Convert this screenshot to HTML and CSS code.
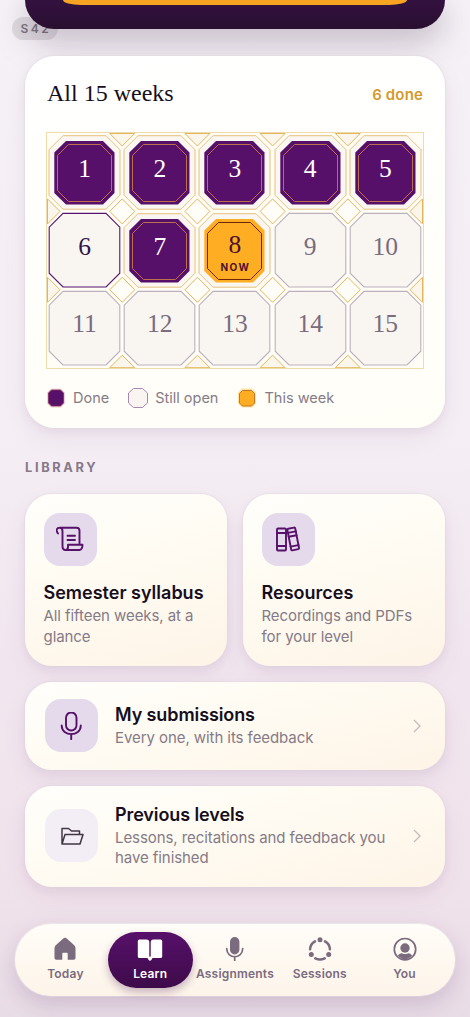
FILE: index.html
```html
<!DOCTYPE html>
<html lang="en">
<head>
<meta charset="utf-8">
<title>Learn</title>
<link rel="stylesheet" href="styles.css">
</head>
<body>
<svg class="defs" aria-hidden="true">
  <symbol id="tile-done" viewBox="0 0 75.2 78.4">
    <path class="lattice" d="M16 2.700H59L73 16.700V62.200L59 76.200H16L2 62.200V16.700Z"/>
    <path class="plum" d="M19 8H56L67.500 19.500V60L56 71.500H19L7.300 60V19.500Z"/>
    <path class="copper" d="M21.500 11.500H53.500L64.500 22.500V57.500L53.500 68.500H21.500L10.500 57.500V22.500Z"/>
  </symbol>
  <symbol id="tile-open" viewBox="0 0 75.2 78.4">
    <path class="outline" d="M16 2.400H59L72.800 16.200V62.200L59 76H16L2.200 62.200V16.200Z"/>
  </symbol>
  <symbol id="tile-now" viewBox="0 0 75.2 78.4">
    <path class="lattice" d="M16 2.700H59L73 16.700V62.200L59 76.200H16L2 62.200V16.700Z"/>
    <path class="amber" d="M19 8H56L67.500 19.500V60L56 71.500H19L7.300 60V19.500Z"/>
    <path class="ink" d="M21.500 11.500H53.500L64.500 22.500V57.500L53.500 68.500H21.500L10.500 57.500V22.500Z"/>
  </symbol>
</svg>

<div class="screen">
  <div class="tag">S42</div>
  <section class="hero"><div class="hero-button"></div></section>

  <section class="card weeks">
    <header class="weeks-head"><h2>All 15 weeks</h2><span>6 done</span></header>
    <div class="board">
      <div class="tile done"><svg><use href="#tile-done"/></svg><b>1</b></div>
      <div class="tile done"><svg><use href="#tile-done"/></svg><b>2</b></div>
      <div class="tile done"><svg><use href="#tile-done"/></svg><b>3</b></div>
      <div class="tile done"><svg><use href="#tile-done"/></svg><b>4</b></div>
      <div class="tile done"><svg><use href="#tile-done"/></svg><b>5</b></div>
      <div class="tile mid open"><svg><use href="#tile-open"/></svg><b>6</b></div>
      <div class="tile mid done"><svg><use href="#tile-done"/></svg><b>7</b></div>
      <div class="tile mid now"><svg><use href="#tile-now"/></svg><b>8<small>NOW</small></b></div>
      <div class="tile mid"><svg><use href="#tile-open"/></svg><b>9</b></div>
      <div class="tile mid"><svg><use href="#tile-open"/></svg><b>10</b></div>
      <div class="tile last"><svg><use href="#tile-open"/></svg><b>11</b></div>
      <div class="tile last"><svg><use href="#tile-open"/></svg><b>12</b></div>
      <div class="tile last"><svg><use href="#tile-open"/></svg><b>13</b></div>
      <div class="tile last"><svg><use href="#tile-open"/></svg><b>14</b></div>
      <div class="tile last"><svg><use href="#tile-open"/></svg><b>15</b></div>
      <svg class="gems" viewBox="0 0 376 235.200">
        <path class="half" d="M62.700.5H87.700L75.200 13ZM137.900.5H162.900L150.400 13ZM213.100.5H238.100L225.600 13ZM288.300.5H313.300L300.800 13Z"/>
        <path class="half" d="M62.700 234.700H87.700L75.200 222.200ZM137.900 234.700H162.900L150.400 222.200ZM213.100 234.700H238.100L225.600 222.200ZM288.300 234.700H313.300L300.800 222.200Z"/>
        <path class="half" d="M.5 65.900V90.900L13 78.400ZM.5 144.300V169.300L13 156.800ZM375.500 65.900V90.900L363 78.400ZM375.500 144.300V169.300L363 156.800Z"/>
        <g class="full">
          <path d="M75.200 65.900l12.500 12.500-12.500 12.500-12.500-12.500ZM150.400 65.900l12.500 12.500-12.500 12.500-12.500-12.500ZM225.600 65.900l12.500 12.500-12.500 12.500-12.500-12.500ZM300.800 65.900l12.500 12.500-12.500 12.500-12.500-12.500Z"/>
          <path d="M75.200 144.300l12.500 12.500-12.500 12.500-12.500-12.500ZM150.400 144.300l12.500 12.500-12.500 12.500-12.500-12.500ZM225.600 144.300l12.500 12.500-12.500 12.500-12.500-12.500ZM300.800 144.300l12.500 12.500-12.500 12.500-12.500-12.500Z"/>
        </g>
      </svg>
    </div>
    <div class="legend">
      <span class="key"><svg viewBox="0 0 20 22"><path class="halo-plum" d="M5 1.500H15L19 5.500V16.500L15 20.500H5L1 16.500V5.500Z"/><path class="swatch-plum" d="M5.500 3H14.500L17.500 6V16L14.500 19H5.500L2.500 16V6Z"/></svg>Done</span>
      <span class="key"><svg viewBox="0 0 20 22"><path class="swatch-open" d="M5.500 1.500H14.500L19.500 6V16L14.500 20.500H5.500L.5 16V6Z"/></svg>Still open</span>
      <span class="key"><svg viewBox="0 0 20 22"><path class="halo-amber" d="M5 1.500H15L19 5.500V16.500L15 20.500H5L1 16.500V5.500Z"/><path class="swatch-amber" d="M5.500 3.500H14.500L17.500 6.500V16L14.500 19H5.500L2.500 16V6.500Z"/></svg>This week</span>
    </div>
  </section>

  <h3 class="section-title">LIBRARY</h3>

  <div class="pair">
    <article class="card tall">
      <div class="icon">
        <svg viewBox="0 0 28 28"><path d="M2 7.500C-.5 4.200 .7 1.800 3.700 1.800H20.500Q23.500 1.800 23.500 4.800V18.200M3.700 1.800C6 1.800 6.500 3.500 6.500 5.200V20.500Q6.500 24 9.500 24H23.500Q26.500 23.500 26.500 18.700H12V21Q12 24 9.500 24M11.500 9.700H19M11.500 14H19"/></svg>
      </div>
      <h4>Semester syllabus</h4>
      <p>All fifteen weeks, at a glance</p>
    </article>
    <article class="card tall">
      <div class="icon">
        <svg viewBox="0 0 28 28"><rect x="3" y="2.500" width="9" height="22" rx="1"/><path d="M3 7H12M3 20H12"/><g transform="rotate(-11 19 13)"><rect x="15.200" y="2" width="8" height="22" rx="1"/><path d="M15.200 6H23.200M15.200 10H23.200M15.200 20H23.200"/></g></svg>
      </div>
      <h4>Resources</h4>
      <p>Recordings and PDFs for your level</p>
    </article>
  </div>

  <article class="card row">
    <div class="icon">
      <svg viewBox="0 0 28 28"><rect x="8" y=".5" width="10.500" height="18" rx="5.250"/><path d="M3.700 13.500C3.700 25 22.800 25 22.800 13.500M13.200 22V27.200"/></svg>
    </div>
    <div class="copy"><h4>My submissions</h4><p>Every one, with its feedback</p></div>
    <svg class="chevron" viewBox="0 0 8 14"><path d="M1 1L7 7L1 13"/></svg>
  </article>

  <article class="card row roomy">
    <div class="icon pale">
      <svg viewBox="0 0 28 28"><path d="M4 22V6.500H10.500L13.500 9H21.500V12.500M4 22L7 12.500H25L22 22Z"/></svg>
    </div>
    <div class="copy"><h4>Previous levels</h4><p>Lessons, recitations and feedback you have finished</p></div>
    <svg class="chevron" viewBox="0 0 8 14"><path d="M1 1L7 7L1 13"/></svg>
  </article>

  <nav class="tabs">
    <a class="tab"><svg viewBox="0 0 24 24"><path d="M12 .8Q13 .8 14 1.800L21 8Q22.500 9.500 22.500 11V21Q22.500 22.700 20.800 22.700H14.700V16.500Q14.700 15.800 14 15.800H10Q9.300 15.800 9.300 16.500V22.700H3.200Q1.500 22.700 1.500 21V11Q1.500 9.500 3 8L10 1.800Q11 .8 12 .8Z"/></svg>Today</a>
    <a class="tab active"><svg viewBox="0 0 26 24"><path d="M2.500 2.500H9.500Q12.300 2.500 12.300 5.500V19.500Q11.300 21 9.500 21H2.500Q.8 21 .8 19.500V4Q.8 2.500 2.500 2.500ZM23.500 2.500H16.500Q13.700 2.500 13.700 5.500V19.500Q14.700 21 16.500 21H23.500Q25.200 21 25.200 19.500V4Q25.200 2.500 23.500 2.500Z"/><path d="M9.500 19.500H16.500L14.500 22.800Q13 24.500 11.500 22.800Z"/></svg>Learn</a>
    <a class="tab"><svg viewBox="0 0 24 24"><rect x="7" y="0" width="9.400" height="17.500" rx="4.700"/><path class="line" d="M3.700 11.500C3.700 22.500 19.700 22.500 19.700 11.500M11.700 19.500V24"/></svg>Assignments</a>
    <a class="tab"><svg viewBox="0 0 24 24"><circle cx="12" cy="2.800" r="2.500"/><circle cx="3.300" cy="17.500" r="2.500"/><circle cx="20.700" cy="17.500" r="2.500"/><path class="arc" d="M7 4.300Q2 7.200 2.100 12.300M17 4.300Q22 7.200 21.900 12.300M7.300 21.300Q12 23.700 16.700 21.300"/></svg>Sessions</a>
    <a class="tab"><svg viewBox="0 0 24 24"><circle class="ring" cx="12" cy="12.200" r="10.700"/><circle cx="12" cy="11" r="4.700"/><path d="M4.800 18.500Q7.500 15.700 9.500 16.500Q12 17.500 14.500 16.500Q16.500 15.700 19.200 18.500Q12 26 4.800 18.500Z"/></svg>You</a>
  </nav>
</div>
</body>
</html>
```
FILE: styles.css
```css
* { box-sizing: border-box; }
body { margin: 0; font-family: Inter, sans-serif; color: #160e1c; }
h2, h3, h4, p { margin: 0; }
svg { fill: none; display: block; }
.defs { position: absolute; width: 0; height: 0; }

.screen {
  position: relative; width: 470px; height: 1017px; overflow: hidden;
  padding: 0 25px;
  display: flex; flex-direction: column;
  background: linear-gradient(#f5f1f6 0, #f5eef4 42%, #f1e6ef 65%, #f0e2eb 88%, #e8dce6 100%);
}

.tag {
  position: absolute; left: 12px; top: 17px; width: 46px; height: 23px;
  border-radius: 12px; background: #ded9df; color: #7c747d;
  font-size: 12px; font-weight: 600; line-height: 23px; letter-spacing: 2.500px; padding-left: 8.500px;
}
.hero {
  position: relative; flex: none; height: 29px;
  padding: 0 38px 24px;
  border-radius: 0 0 31px 31px;
  background: linear-gradient(#331140, #2a0f30);
  box-shadow: 0 8px 24px rgba(57, 25, 65, .14), 0 14px 40px rgba(57, 25, 65, .18);
}
.hero-button { height: 5px; border-radius: 0 0 18px 18px / 0 0 5px 5px; background: #f6a422; }

.card {
  position: relative; flex: none;
  border-radius: 27px;
  background: linear-gradient(165deg, #fffefb 0%, #fffcf4 35%, #fef4e7 100%);
  box-shadow: 0 0 0 1px rgba(225, 211, 217, .35), 0 4px 10px rgba(82, 34, 94, .06), 0 10px 26px rgba(82, 34, 94, .06);
}
.weeks {
  margin-top: 27px; height: 372px; padding: 25px 22px 0; border-radius: 30px;
  background: linear-gradient(170deg, #ffffff, #fffef7);
}
.weeks-head { display: flex; justify-content: space-between; height: 51.500px; }
.weeks-head h2 { font: 400 24px/24px "Liberation Serif", serif; }
.weeks-head span { font-size: 15px; font-weight: 600; line-height: 28px; color: #d39a2c; letter-spacing: .15px; }

.board {
  position: relative; width: 376px;
  display: grid; grid-template: repeat(3, 78.400px) / repeat(5, 75.200px);
  background: #fffdf6; outline: 1px solid #f0dcab;
}
.tile { display: grid; color: #796c7c; }
.tile > * { grid-area: 1 / 1; }
.tile svg { width: 75.200px; height: 78.400px; stroke: #bbb1bd; }
.tile.open svg { stroke: #55136b; }
.tile b { z-index: 1; justify-self: center; padding-top: 22px; text-align: center; font: 400 25.500px/28px "Liberation Serif", serif; }
.tile.last b { padding-top: 21px; }
.tile.done b { color: #fff; }
.tile.open b { color: #321448; }
.tile.now b { color: #4d112f; padding-top: 20px; }
.tile small { display: block; font: 700 10px/12px Inter, sans-serif; letter-spacing: 1.500px; margin: 2px -1px 0 0; }
.lattice { fill: #faf6f1; stroke: #e6c17c; stroke-width: 1; }
.plum { fill: #57106a; stroke: none; }
.copper { stroke: #be7149; stroke-width: 1; }
.amber { fill: #ffae23; stroke: none; }
.ink { stroke: #6c250e; stroke-width: 1; }
.outline { fill: #f9f6f2; stroke: inherit; stroke-width: 1.100; }
.gems { position: absolute; inset: 0; width: 376px; height: 235.200px; stroke: #e3b55a; stroke-width: 1; }
.half { fill: #fbf6ec; }
.full { fill: #fffdf8; }

.legend { display: flex; gap: 19px; margin: 19.500px 0 0 -1px; color: #857b87; font-size: 14.500px; line-height: 22px; letter-spacing: 0; }
.key { display: flex; gap: 7px; }
.key svg { width: 20px; height: 22px; }
.halo-plum { fill: #efcfd2; }
.swatch-plum { fill: #57106a; stroke: #812d5b; stroke-width: .800; }
.swatch-open { fill: #faf5f1; stroke: #aa86b2; stroke-width: 1; }
.halo-amber { fill: #ffe1a3; }
.swatch-amber { fill: #ffae23; stroke: #c27827; stroke-width: 1; }

.section-title { margin: 30px 0 17px; font-size: 12.800px; font-weight: 650; line-height: 19px; letter-spacing: 2.650px; color: #857889; }

.pair { display: grid; grid-template-columns: 1fr 1fr; gap: 16px; flex: none; }
.tall { height: 172px; padding: 19px 12px 0 18.500px; }
.tall h4 { margin-top: 15px; }
.icon {
  flex: none; width: 53px; height: 53px; border-radius: 16px; background: #e5d9ec;
  display: grid; place-items: center;
}
.icon svg { width: 28px; height: 28px; stroke: #571169; stroke-width: 1.900; stroke-linecap: round; stroke-linejoin: round; }
.icon.pale { background: #f3eef6; }
.icon.pale svg { stroke: #403745; stroke-width: 1.500; }
.card h4 { font-size: 18px; font-weight: 600; line-height: 24px; }
.card p { margin-top: 1px; font-size: 15px; line-height: 20.500px; letter-spacing: -.07px; color: #857b87; }

.row { display: flex; align-items: center; margin-top: 16px; height: 87.500px; padding: 0 24px 0 20px; gap: 17px; }
.row h4 { letter-spacing: -.1px; }
.row.roomy { height: 101px; }
.copy { flex: 1; padding-bottom: 1px; }
.roomy .icon { margin-top: -1px; }
.chevron { width: 8px; height: 14px; stroke: #c4bbbd; stroke-width: 1.300; }

.tabs {
  position: absolute; left: 15px; right: 15px; top: 923.500px; height: 72px;
  border-radius: 36px; padding: 8px; display: grid; grid-template-columns: repeat(5, 1fr);
  background: linear-gradient(#fffdf8, #fdf4e9);
  box-shadow: 0 8px 22px rgba(82, 34, 94, .18), 0 0 0 1px rgba(255, 255, 255, .4);
}
.tab {
  height: 56px; display: flex; flex-direction: column; align-items: center; gap: 5px; padding-top: 5px;
  font-size: 12px; font-weight: 600; line-height: 16px; letter-spacing: .2px; color: #7b6b7e; white-space: nowrap;
}
.tab svg { height: 24px; width: 26px; fill: #7b6b7e; }
.line, .arc, .ring { fill: none; stroke: #7b6b7e; stroke-width: 1.700; stroke-linecap: round; }
.arc { stroke-width: 2.500; }
.active {
  border-radius: 28px; color: #fff;
  background: linear-gradient(#57106a, #3d0b49);
  box-shadow: 0 4px 8px rgba(70, 20, 80, .3);
}
.active svg { fill: #fff; }
```
